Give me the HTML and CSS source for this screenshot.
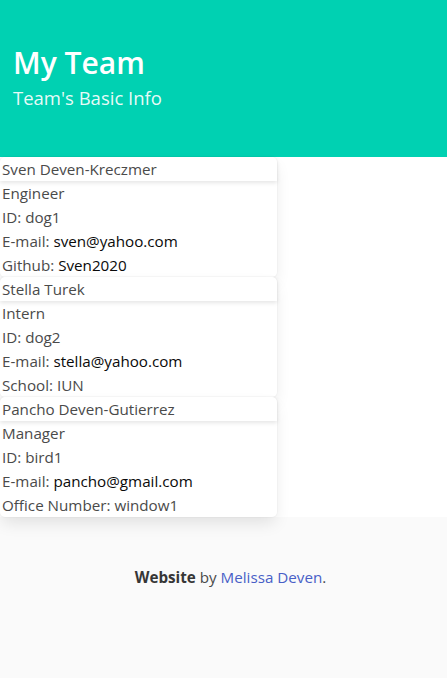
FILE: index.html
```html
<!DOCTYPE html>
<html lang="en">
<head>
<meta charset="utf-8">
<title>My Team</title>
<link rel="stylesheet" href="styles.css">
</head>
<body>
<section class="hero">
  <div class="hero-body">
    <h1 class="title">My Team</h1>
    <h2 class="subtitle">Team's Basic Info</h2>
  </div>
</section>
<main class="team">
  <div class="card">
    <header class="card-header">Sven Deven-Kreczmer</header>
    <div class="card-content">
      <p>Engineer</p>
      <p>ID: dog1</p>
      <p>E-mail: <a class="plain" href="#">sven@yahoo.com</a></p>
      <p>Github: <a class="plain" href="#">Sven2020</a></p>
    </div>
  </div>
  <div class="card">
    <header class="card-header">Stella Turek</header>
    <div class="card-content">
      <p>Intern</p>
      <p>ID: dog2</p>
      <p>E-mail: <a class="plain" href="#">stella@yahoo.com</a></p>
      <p>School: IUN</p>
    </div>
  </div>
  <div class="card">
    <header class="card-header">Pancho Deven-Gutierrez</header>
    <div class="card-content">
      <p>Manager</p>
      <p>ID: bird1</p>
      <p>E-mail: <a class="plain" href="#">pancho@gmail.com</a></p>
      <p>Office Number: window1</p>
    </div>
  </div>
</main>
<footer class="footer">
  <p><strong>Website</strong> by <a class="link" href="#">Melissa Deven</a>.</p>
</footer>
</body>
</html>
```
FILE: styles.css
```css
html, body {
  margin: 0;
  padding: 0;
}
body {
  font-family: "Open Sans", "Noto Sans", sans-serif;
  font-size: 15.2px;
  line-height: 24px;
  color: #4a4a4a;
  background: #fff;
}
h1, h2, p {
  margin: 0;
}
.hero {
  background: #00d1b2;
  color: #fff;
}
.hero-body {
  height: 157px;
  box-sizing: border-box;
  padding: 45px 13px 0;
}
.title {
  font-size: 30px;
  font-weight: 600;
  line-height: 36px;
}
.subtitle {
  font-size: 18.5px;
  font-weight: 400;
  line-height: 25px;
  margin-top: 4px;
  color: rgba(255,255,255,0.92);
}
.team {
  width: 277px;
}
.card {
  background: #fff;
  border-radius: 5px;
  box-shadow: 0 8px 16px -2px rgba(10,10,10,0.1), 0 0 0 1px rgba(10,10,10,0.02);
  position: relative;
}
.card-header {
  display: block;
  height: 24px;
  padding-left: 2px;
  border-radius: 5px 5px 0 0;
  box-shadow: 0 2px 4px rgba(10,10,10,0.1);
}
.card-content {
  padding-left: 2px;
}
.card-content p {
  height: 24px;
}
.plain {
  color: #0a0a0a;
  text-decoration: none;
}
.footer {
  background: #fafafa;
  padding: 48px 24px 96px 38px;
  text-align: center;
}
.footer strong {
  color: #363636;
  font-weight: 700;
}
.link {
  color: #485fc7;
  text-decoration: none;
}
```
